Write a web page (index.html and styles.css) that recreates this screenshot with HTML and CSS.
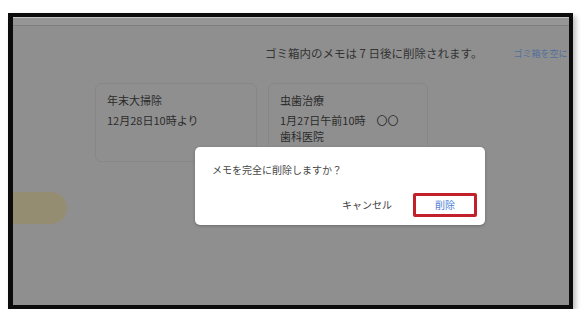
FILE: index.html
```html
<!DOCTYPE html>
<html lang="ja">
<head>
<meta charset="utf-8">
<title>ゴミ箱</title>
<link rel="stylesheet" href="styles.css">
</head>
<body>
<div class="frame">
  <div class="screen">
    <div class="topbar"></div>

    <div class="sidebar">
      <div class="nav-active"></div>
    </div>

    <div class="main">
      <div class="notice">
        <span class="notice-text">ゴミ箱内のメモは 7 日後に削除されます。</span>
        <span class="notice-link">ゴミ箱を空に</span>
      </div>

      <div class="cards">
        <div class="card card-short">
          <div class="card-title">年末大掃除</div>
          <div class="card-body">12月28日10時より</div>
        </div>
        <div class="card card-tall">
          <div class="card-title">虫歯治療</div>
          <div class="card-body">1月27日午前10時　〇〇<br>歯科医院</div>
        </div>
      </div>
    </div>

    <!-- confirm dialog sits over the page -->
    <div class="dialog">
      <p class="dialog-text">メモを完全に削除しますか？</p>
      <div class="dialog-actions">
        <span class="btn btn-cancel">キャンセル</span>
        <span class="btn btn-delete">削除</span>
      </div>
    </div>
  </div>
</div>
</body>
</html>
```

FILE: styles.css
```css
body {
  margin: 0;
  background-color: white;
  font-family: "Noto Sans CJK JP", "Noto Sans", sans-serif;
}

.frame {
  width: 556px;
  height: 288px;
  margin: 13px 0 0 8px;
  border-style: solid;
  border-color: #0c0c0c;
  border-width: 4px 4px 4px 5px;
  box-shadow: 3px 3px 5px rgba(0, 0, 0, 0.25);
}

.screen {
  position: relative;
  height: 100%;
  overflow: hidden;
  background-color: #8f8f8f;
  display: grid;
  grid-template-columns: 82px 1fr;
  grid-template-rows: 9px 1fr;
}

.topbar {
  grid-column: 1 / 3;
  background-color: #959595;
  border-top: 1px solid #c4c4c4;
  border-bottom: 1px solid #7e7e7e;
}

.sidebar {
  padding-top: 166px;
}

.nav-active {
  width: 54px;
  height: 32px;
  background-color: #958d72;
  border-radius: 0 16px 16px 0;
}

.main {
  padding-top: 19px;
  min-width: 0;
}

.notice {
  display: flex;
  align-items: center;
  height: 16px;
  padding-left: 170px;
  white-space: nowrap;
}

.notice-text {
  font-size: 11.5px;
  color: #333333;
}

.notice-link {
  margin-left: 31px;
  font-size: 9px;
  color: #51709c;
}

.cards {
  display: flex;
  align-items: flex-start;
  gap: 11px;
  margin-top: 22px;
}

.card {
  border: 1px solid #878787;
  border-radius: 6px;
  padding: 8px 11px;
  color: #2b2b2b;
  font-size: 11px;
  line-height: 16px;
}

.card-short {
  width: 138px;
  height: 61px;
}

.card-tall {
  width: 136px;
  height: 90px;
}

.card-title {
  margin-bottom: 4px;
}

.dialog {
  position: absolute;
  left: 182px;
  top: 130px;
  width: 290px;
  height: 78px;
  box-sizing: border-box;
  padding: 16px 8px 8px 17px;
  background-color: white;
  border-radius: 5px;
  box-shadow: 0 1px 3px rgba(0, 0, 0, 0.25);
}

.dialog-text {
  margin: 0;
  font-size: 10px;
  line-height: 14px;
  color: #484848;
}

.dialog-actions {
  display: flex;
  justify-content: flex-end;
  align-items: center;
  gap: 21px;
  margin-top: 16px;
}

.btn {
  font-size: 10px;
  line-height: 14px;
}

.btn-cancel {
  color: #3c3c3c;
}

.btn-delete {
  display: flex;
  align-items: center;
  justify-content: center;
  width: 64px;
  height: 24px;
  box-sizing: border-box;
  border: 3px solid #c2202b;
  border-radius: 2px;
  color: #4f82d6;
}
```
